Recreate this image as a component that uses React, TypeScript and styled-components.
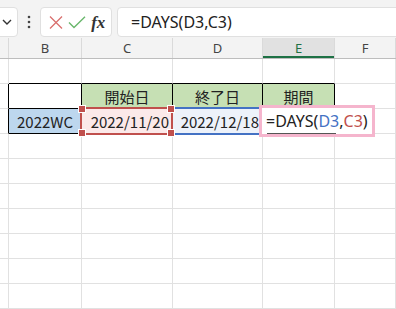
import React from "react";
import styled, { createGlobalStyle } from "styled-components";

const GlobalStyle = createGlobalStyle`
html, body {
  margin: 0;
  padding: 0;
  background: #ffffff;
  overflow: hidden;
}
`;

const COLUMNS = ["", "B", "C", "D", "E", "F"];
const ROW_COUNT = 10;

type Tone = "plain" | "head" | "label" | "start" | "end" | "edit";

// cells of the small table, keyed by "row-col"
const TABLE: Record<string, { text?: string; tone: Tone; align?: "left" | "center" | "right" }> = {
  "2-1": { tone: "plain" },
  "2-2": { text: "開始日", tone: "head", align: "center" },
  "2-3": { text: "終了日", tone: "head", align: "center" },
  "2-4": { text: "期間", tone: "head", align: "center" },
  "3-1": { text: "2022WC", tone: "label", align: "center" },
  "3-2": { text: "2022/11/20", tone: "start", align: "right" },
  "3-3": { text: "2022/12/18", tone: "end", align: "right" },
  "3-4": { tone: "edit" },
};

const isTableRow = (r: number) => r === 2 || r === 3;

const App = () => {
  return (
    <Page>
      <GlobalStyle />

      <Toolbar>
        <NameBox>
          <svg width="10" height="6" viewBox="0 0 10 6">
            <path d="M1 1 L5 5 L9 1" fill="none" stroke="#333" strokeWidth="1.4" />
          </svg>
        </NameBox>

        <Dots>
          <svg width="4" height="14" viewBox="0 0 4 14">
            <circle cx="2" cy="2" r="1.3" fill="#444" />
            <circle cx="2" cy="7" r="1.3" fill="#444" />
            <circle cx="2" cy="12" r="1.3" fill="#444" />
          </svg>
        </Dots>

        <ActionBox>
          <svg width="14" height="13" viewBox="0 0 14 13">
            <path d="M1 0.5 L13 12.5 M13 0.5 L1 12.5" stroke="#d9706e" strokeWidth="1.3" fill="none" />
          </svg>
          <svg width="18" height="13" viewBox="0 0 18 13">
            <path d="M1 6.5 L6 11.5 L17 0.8" stroke="#69b76c" strokeWidth="1.4" fill="none" />
          </svg>
          <Fx>fx</Fx>
        </ActionBox>

        <FormulaBox>=DAYS(D3,C3)</FormulaBox>
      </Toolbar>

      <HeaderRow>
        {COLUMNS.map((c, i) => (
          <ColumnHeader key={i} $active={c === "E"}>
            {c}
          </ColumnHeader>
        ))}
      </HeaderRow>

      <Sheet>
        {Array.from({ length: ROW_COUNT }, (_, ri) => {
          const r = ri + 1;
          return COLUMNS.map((_, c) => {
            const cell = TABLE[`${r}-${c}`];
            const darkRight = isTableRow(r) && c >= 0 && c <= 4;
            const darkBottom = c >= 1 && c <= 4 && r >= 1 && r <= 3;
            return (
              <Cell
                key={`${r}-${c}`}
                $tone={cell?.tone ?? "plain"}
                $align={cell?.align ?? "left"}
                $darkRight={darkRight}
                $darkBottom={darkBottom}
              >
                {cell?.text}
                {cell?.tone === "start" && (
                  <RefFrame $color="#c0504d" $front>
                    <Handle style={{ left: -4, top: -4 }} />
                    <Handle style={{ right: -4, top: -4 }} />
                    <Handle style={{ left: -4, bottom: -4 }} />
                    <Handle style={{ right: -4, bottom: -4 }} />
                  </RefFrame>
                )}
                {cell?.tone === "end" && <RefFrame $color="#4472c4" />}
                {cell?.tone === "edit" && (
                  <EditBox>
                    <span>=DAYS(</span>
                    <RefText $color="#4472c4">D3</RefText>
                    <span>,</span>
                    <RefText $color="#c0504d">C3</RefText>
                    <span>)</span>
                    <HintLine />
                  </EditBox>
                )}
              </Cell>
            );
          });
        })}
      </Sheet>
    </Page>
  );
};

export default App;

const Page = styled.div`
width: 396px;
height: 309px;
overflow: hidden;
display: flex;
flex-direction: column;
background: #ffffff;
`;

const Toolbar = styled.div`
display: flex;
align-items: flex-start;
height: 45px;
padding-top: 7px;
box-sizing: border-box;
background: #f3f3f3;
`;

const NameBox = styled.div`
display: flex;
align-items: center;
justify-content: flex-end;
width: 30px;
height: 30px;
margin-left: -12px;
padding-right: 5px;
box-sizing: border-box;
background: #ffffff;
border: 1px solid #e0e0e0;
border-radius: 4px;
`;

const Dots = styled.div`
display: flex;
align-items: center;
justify-content: center;
width: 22px;
height: 30px;
`;

const ActionBox = styled.div`
display: flex;
align-items: center;
justify-content: space-around;
width: 72px;
height: 30px;
box-sizing: border-box;
padding: 0 3px 0 5px;
background: #ffffff;
border: 1px solid #e0e0e0;
border-radius: 4px;
`;

const Fx = styled.span`
color: #333;
font-family: "Liberation Serif", serif;
font-size: 17px;
font-style: italic;
font-weight: 700;
line-height: 1;
`;

const FormulaBox = styled.div`
flex: 1;
display: flex;
align-items: center;
height: 30px;
margin-left: 5px;
margin-right: -10px;
padding-left: 13px;
box-sizing: border-box;
background: #ffffff;
border: 1px solid #e0e0e0;
border-radius: 4px;

color: #222;
font-family: "Noto Sans", sans-serif;
font-size: 16px;
`;

const GRID = `9px 73px 91px 90px 72px 1fr`;

const HeaderRow = styled.div`
display: grid;
grid-template-columns: ${GRID};
height: 25px;
background: #f3f3f3;
border-bottom: 1px solid #bdbdbd;
box-sizing: border-box;
`;

const ColumnHeader = styled.div<{ $active: boolean }>`
display: flex;
align-items: center;
justify-content: center;
box-sizing: border-box;
border-right: 1px solid #dadada;
background: ${(p) => (p.$active ? "#e1e1e1" : "transparent")};
box-shadow: ${(p) => (p.$active ? "inset 0 -2px 0 #1e7145" : "none")};

color: ${(p) => (p.$active ? "#1e7145" : "#444")};
font-family: "Noto Sans", sans-serif;
font-size: 13px;
`;

const Sheet = styled.div`
display: grid;
grid-template-columns: ${GRID};
grid-auto-rows: 25px;
`;

const FILL: Record<Tone, string> = {
  plain: "transparent",
  head: "#c6e0b4",
  label: "#bdd7ee",
  start: "#fbe9e9",
  end: "#edf2fa",
  edit: "#ffffff",
};

const Cell = styled.div<{
  $tone: Tone;
  $align: "left" | "center" | "right";
  $darkRight: boolean;
  $darkBottom: boolean;
}>`
position: relative;
display: flex;
align-items: center;
justify-content: ${(p) =>
  p.$align === "center" ? "center" : p.$align === "right" ? "flex-end" : "flex-start"};
padding: 0 3px;
box-sizing: border-box;
white-space: nowrap;
background: ${(p) => FILL[p.$tone]};
border-right: 1px solid ${(p) => (p.$darkRight ? "#000" : "#e1e1e1")};
border-bottom: 1px solid ${(p) => (p.$darkBottom ? "#000" : "#e1e1e1")};

color: #222;
font-family: "Noto Sans CJK JP", sans-serif;
font-size: 15px;
`;

const RefFrame = styled.div<{ $color: string; $front?: boolean }>`
position: absolute;
left: -2px;
top: -2px;
right: -1px;
bottom: -2px;
border: 2px solid ${(p) => p.$color};
z-index: ${(p) => (p.$front ? 3 : 2)};
pointer-events: none;
`;

const Handle = styled.div`
position: absolute;
width: 6px;
height: 6px;
background: #c0504d;
border: 1px solid #ffffff;
`;

const EditBox = styled.div`
position: absolute;
left: -4px;
top: -4px;
width: 116px;
height: 32px;
display: flex;
align-items: center;
padding-left: 4px;
box-sizing: border-box;
background: #ffffff;
border: 3px solid #f5b5cd;
z-index: 4;

color: #222;
font-family: "Noto Sans", sans-serif;
font-size: 16px;
`;

const RefText = styled.span<{ $color: string }>`
color: ${(p) => p.$color};
`;

const HintLine = styled.div`
position: absolute;
left: 5px;
bottom: 0;
width: 69px;
height: 1px;
background: #555;
`;
